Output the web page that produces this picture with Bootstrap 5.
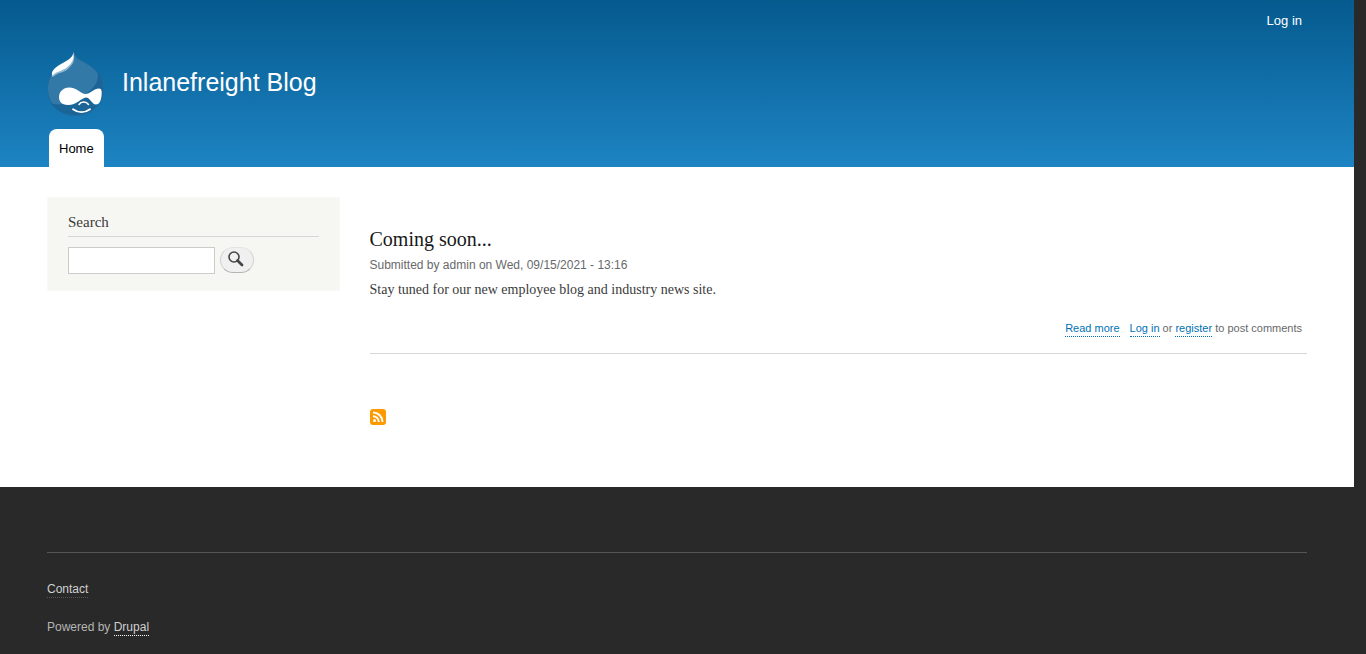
<!DOCTYPE html>
<html lang="en">
<head>
<meta charset="utf-8">
<meta name="viewport" content="width=device-width, initial-scale=1">
<title>Inlanefreight Blog</title>
<link href="https://cdn.jsdelivr.net/npm/bootstrap@5.3.0/dist/css/bootstrap.min.css" rel="stylesheet">
<style>
  body { background: #292929; color: #3b3b3b; font: 14px/21px "Liberation Serif", serif; padding-right: 12px; }
  .sans { font-family: "Liberation Sans", sans-serif; }
  .site-width { max-width: 1290px; padding-left: 15px; padding-right: 15px; }
  .site-header { background: linear-gradient(#055a8e 0%, #1d84c3 100%); }
  .account-nav { height: 41px; padding-right: 5px; font-size: 13px; }
  .account-nav a { color: #fffeff; }
  .brand { height: 88px; gap: 18px; padding-bottom: 2px; }
  .brand-name { font-size: 25px; line-height: 30px; color: #fffeff; padding-bottom: 4px; }
  .main-tab { margin-left: 2px; height: 38px; padding: 0 10px; border-radius: 8px 8px 0 0; background: #fff; color: #000; font-size: 13px; line-height: 40px; }
  .page-main { padding: 30px 0 62px; }
  .page-main .row { --bs-gutter-x: 30px; }
  .search-block { background: #f6f6f2; border: 1px solid #f9f9f9; padding: 14px 20px 16px; }
  .search-block h2 { font-size: 15px; line-height: 21px; margin: 0 0 10px; padding-bottom: 3px; border-bottom: 1px solid #d6d6d6; }
  .search-block form { gap: 5px; }
  .search-block input { width: 147px; height: 27px; border: 1px solid #ccc; border-radius: 0; padding: 4px; }
  .search-block button { width: 34px; height: 26px; padding: 0 2px 2px 0; border: 1px solid #e4e4e4; border-bottom-color: #b4b4b4; border-left-color: #d2d2d2; border-right-color: #d2d2d2; border-radius: 13px; background: #f0f0f0; }
  .post { padding: 29px 0 16px; border-bottom: 1px solid #d3d7d9; margin-bottom: 55px; }
  .post h2 { font-size: 20px; line-height: 26px; margin: 0 0 3px; }
  .post h2 a { color: #181818; }
  .submitted { font-size: 12px; line-height: 20px; color: #68696b; }
  .post-body { line-height: 21px; margin: 4px 0 18px; }
  .post-links { font-size: 11px; line-height: 16px; gap: 10px; padding: 2px 5px 1px 0; color: #68696b; }
  .dotted { color: #0071b3; text-decoration: none; border-bottom: 1px dotted #0071b3; padding-bottom: 2px; }
  .feed-icon { height: 16px; width: 16px; }
  .site-footer { padding-top: 65px; font-size: 12px; line-height: 18px; color: #b5b5b5; }
  .footer-inner { border-top: 1px solid #555; padding: 27px 0 18px; gap: 20px; }
  .site-footer .dotted { color: #d0d0d0; border-bottom-color: #fcfcfc; padding-bottom: 1px; }
  .site-footer .faint { border-bottom-color: #555; }
</style>
</head>
<body>
<header class="site-header sans">
  <div class="container-fluid site-width">
    <nav class="account-nav d-flex align-items-center justify-content-end" aria-label="User account">
      <a class="text-decoration-none" href="#">Log in</a>
    </nav>
    <div class="brand d-flex align-items-center">
      <a href="#" aria-label="Home" class="d-flex">
        <svg width="57" height="65" viewBox="0 0 57 65" aria-hidden="true">
          <path d="M27 0C28 5 31 7 36 9.500C46 15 56.500 22 56.500 37C56.500 53 44 63.500 28.500 63.500C12.500 63.500 .5 52 .5 36C.5 25 8 17 17 11.500C22 8 26 5 27 0Z" fill="#3279a8" stroke="#1f6a9c"/>
          <path d="M50 18C54 23 56 30 56 37C56 53 44 63 28.500 63C17 63 8 58 4 51C11 54 20 52 30 47C45 40 54 30 50 18Z" fill="#1b6497"/>
          <path d="M27 3C28 10 25 13 21 17C17 21 11 20 6 25C3 24 6 18 14 14C21 10 26 8 27 3Z" fill="#8fb7d1"/>
          <path d="M26.500 0C27.500 7 25 11 20 15.500C15 19 10 19 5.500 23.500C3.500 20 7 16 14 12C20 8.500 26 6 26.500 0Z" fill="#fff"/>
          <path d="M22 35.500C30 35.500 34 42 38.500 42C43 42 47 36.500 52 36.500C55 36.500 55 40 54.500 44C54 49 52 52.500 49 52.500C45 52.500 43 45.500 39 45.500C34 46 30 53 21 53C14 53 12 49 12 45C12 40 16 35.500 22 35.500Z" fill="#fff"/>
          <path d="M32 52.500C34 49.500 39 49 41.500 52.500" fill="none" stroke="#fff" stroke-width="1.500" stroke-linecap="round"/>
          <path d="M26 57.200C31 61 38 61 43 57.200" fill="none" stroke="#fff" stroke-width="1.800" stroke-linecap="round"/>
        </svg>
      </a>
      <a class="brand-name text-decoration-none" href="#">Inlanefreight Blog</a>
    </div>
    <nav class="d-flex" aria-label="Main navigation">
      <a class="main-tab text-decoration-none" href="#">Home</a>
    </nav>
  </div>
</header>

<div class="bg-white">
  <div class="container-fluid site-width">
    <div class="page-main">
      <div class="row">
        <aside class="col-3">
          <section class="search-block">
            <h2 class="fw-normal">Search</h2>
            <form class="d-flex" role="search" onsubmit="return false">
              <input type="search" aria-label="Search">
              <button type="submit" aria-label="Search" class="d-flex align-items-center justify-content-center">
                <svg width="16" height="16" viewBox="0 0 16 16" fill="none" stroke="#454545" aria-hidden="true">
                  <circle cx="6" cy="6" r="5" stroke-width="1.600"/>
                  <path d="M9.500 9.500L14 14" stroke-width="2.800" stroke-linecap="round"/>
                </svg>
              </button>
            </form>
          </section>
        </aside>
        <main class="col-9">
          <article class="post">
            <h2 class="fw-normal"><a class="text-decoration-none" href="#">Coming soon...</a></h2>
            <div class="submitted sans">Submitted by admin on Wed, 09/15/2021 - 13:16</div>
            <p class="post-body">Stay tuned for our new employee blog and industry news site.</p>
            <div class="post-links sans d-flex justify-content-end">
              <span><a class="dotted" href="#">Read more</a></span>
              <span><a class="dotted" href="#">Log in</a> or <a class="dotted" href="#">register</a> to post comments</span>
            </div>
          </article>
          <a class="feed-icon d-block" href="#" aria-label="Subscribe to feed">
            <svg class="d-block" width="16" height="16" viewBox="0 0 16 16" aria-hidden="true">
              <rect width="16" height="16" rx="3" fill="#ff9900"/>
              <circle cx="4.500" cy="11.500" r="1.500" fill="#fff"/>
              <path d="M3 7.200A5.800 5.800 0 0 1 8.800 13M3 3.500A9.500 9.500 0 0 1 12.500 13" fill="none" stroke="#fff" stroke-width="2"/>
            </svg>
          </a>
        </main>
      </div>
    </div>
  </div>
</div>

<footer class="site-footer sans">
  <div class="container-fluid site-width">
    <div class="footer-inner d-flex flex-column">
      <div><a class="dotted faint" href="#">Contact</a></div>
      <div>Powered by <a class="dotted" href="#">Drupal</a></div>
    </div>
  </div>
</footer>
<script src="https://cdn.jsdelivr.net/npm/bootstrap@5.3.0/dist/js/bootstrap.bundle.min.js"></script>
</body>
</html>
